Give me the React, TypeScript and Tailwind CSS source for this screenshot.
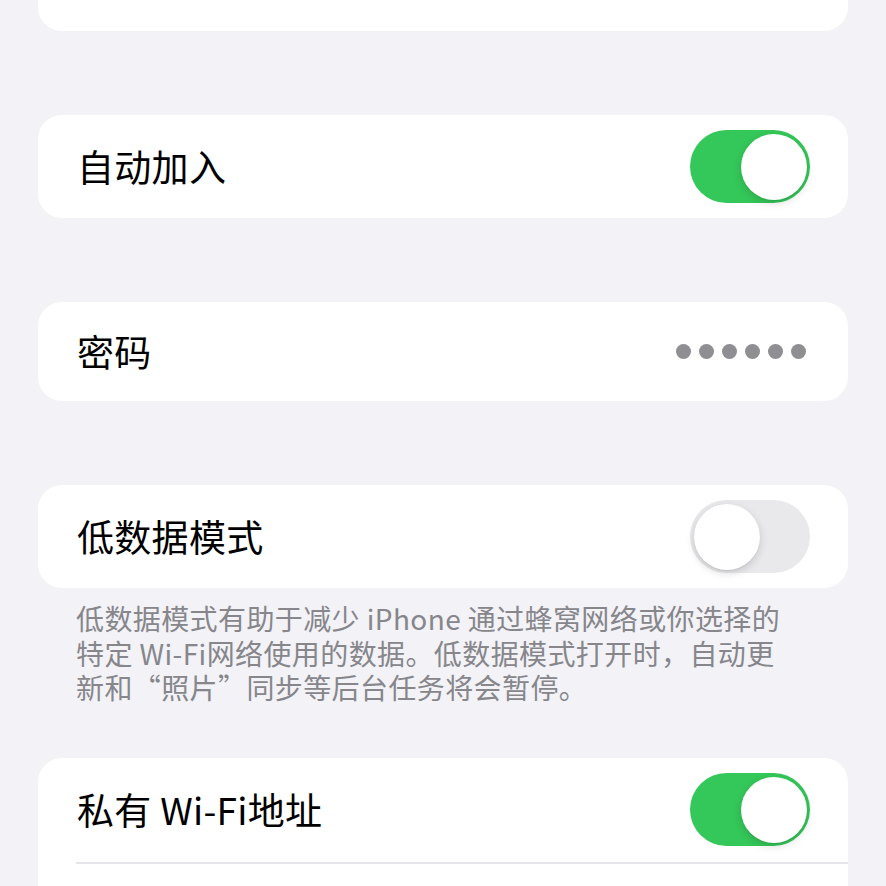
import { FC } from "react";

const Toggle: FC<{ on: boolean }> = ({ on }) => {
    return (
        <div
            className={
                "relative w-[120px] h-[73px] rounded-full shrink-0 " +
                (on ? "bg-[#34c759]" : "bg-[#e9e9eb]")
            }
        >
            <div
                className={
                    "absolute top-[3.5px] w-[66px] h-[66px] rounded-full bg-white shadow-[0_3px_8px_rgba(0,0,0,0.15),0_1px_1px_rgba(0,0,0,0.06)] " +
                    (on ? "right-[3.5px]" : "left-[3.5px]")
                }
            />
        </div>
    );
};

const Row: FC<{ label: string; children?: React.ReactNode; h?: string }> = ({ label, children, h = "h-[103px]" }) => {
    return (
        <div className={"flex items-center justify-between pl-[39px] pr-[38px] " + h}>
            <span className="text-[37px] leading-none text-black tracking-[0.3px]">{label}</span>
            {children}
        </div>
    );
};

const App: FC = () => {

    // RENDER

    return (
        <div
            className="w-full h-[886px] overflow-hidden bg-[#f2f2f7] px-[38px]"
            style={{ fontFamily: '"Noto Sans CJK SC", "Noto Sans", sans-serif' }}
        >
            {/* card above, mostly scrolled away */}
            <div className="mt-[-72px] h-[103px] rounded-[24px] bg-white" />

            <div className="mt-[84px] rounded-[24px] bg-white">
                <Row label="自动加入">
                    <Toggle on={true} />
                </Row>
            </div>

            <div className="mt-[84px] rounded-[24px] bg-white">
                <Row label="密码" h="h-[99px]">
                    <div className="flex gap-[8px] pr-[4px]">
                        {[0, 1, 2, 3, 4, 5].map((i) => (
                            <span key={i} className="w-[15px] h-[15px] rounded-full bg-[#8e8e93]" />
                        ))}
                    </div>
                </Row>
            </div>

            <div className="mt-[84px] rounded-[24px] bg-white">
                <Row label="低数据模式">
                    <Toggle on={false} />
                </Row>
            </div>

            <p className="mt-[13px] pl-[38px] pr-[20px] text-[28px] leading-[34.5px] text-[#86868b] tracking-[0.4px] whitespace-nowrap">
                低数据模式有助于减少 iPhone 通过蜂窝网络或你选择的<br />
                特定 Wi-Fi网络使用的数据。低数据模式打开时，自动更<br />
                新和“照片”同步等后台任务将会暂停。
            </p>

            <div className="mt-[53px] rounded-[24px] bg-white">
                <Row label="私有 Wi-Fi地址" h="h-[104px]">
                    <Toggle on={true} />
                </Row>
                <div className="ml-[38px] h-[2px] bg-[#e5e5ea]" />
                <div className="h-[103px]" />
            </div>
        </div>
    );
};

export default App;
